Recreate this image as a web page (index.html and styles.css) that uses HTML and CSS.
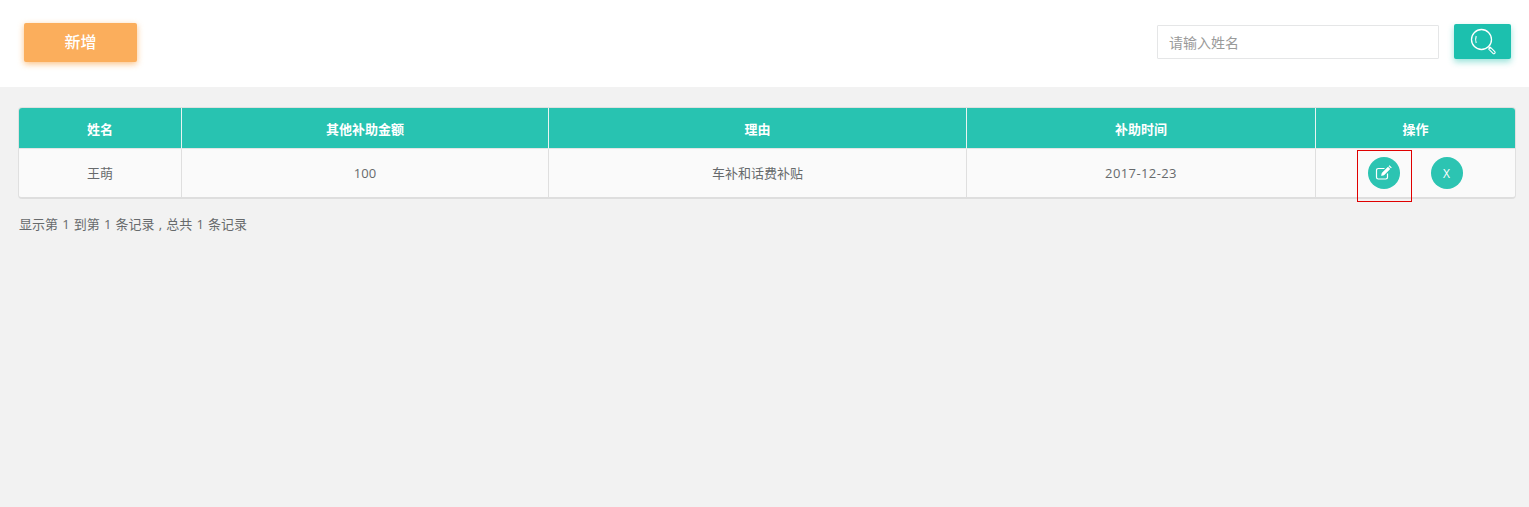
FILE: index.html
```html
<!DOCTYPE html>
<html lang="zh-CN">
<head>
  <meta charset="UTF-8" />
  <title>其他补助</title>
  <link rel="stylesheet" href="styles.css">
</head>
<body>
  <div class="toolbar">
    <button class="add-button">新增</button>
    <div class="search">
      <input class="search-input" type="text" placeholder="请输入姓名" />
      <button class="search-button" aria-label="搜索">
        <svg width="28" height="28" viewBox="0 0 28 28" fill="none" stroke="#fff">
          <circle cx="11.5" cy="11.5" r="10" stroke-width="1.3" />
          <path d="M6.200 8c-.8 2.300-.8 4.700 0 7" stroke-width="1.100" />
          <path d="M18.600 18.600l1.900 1.900" stroke-width="1.300" />
          <path d="M20.500 19.300l4.300 4.300a1.100 1.100 0 0 1 0 1.600l-.2.2a1.100 1.100 0 0 1-1.600 0l-4.300-4.300z" stroke-width="1.100" />
        </svg>
      </button>
    </div>
  </div>

  <div class="content">
    <table class="data-table">
      <thead>
        <tr>
          <th class="col-name">姓名</th>
          <th class="col-money">其他补助金额</th>
          <th class="col-reason">理由</th>
          <th class="col-time">补助时间</th>
          <th>操作</th>
        </tr>
      </thead>
      <tbody>
        <tr>
          <td>王萌</td>
          <td class="num-cell">100</td>
          <td>车补和话费补贴</td>
          <td class="num-cell date-cell">2017-12-23</td>
          <td class="num-cell">
            <div class="actions">
              <button class="round-button" aria-label="编辑">
                <svg class="edit-icon" width="18" height="16" viewBox="0 0 18 16" fill="none" stroke="#fff">
                  <path d="M12.500 8.500v3.800a1.700 1.700 0 0 1-1.700 1.700H3.200a1.700 1.700 0 0 1-1.700-1.700V5.200a1.700 1.700 0 0 1 1.700-1.700h6.300" stroke-width="1.200" />
                  <path d="M6.500 10.500l.6-2.500 5.900-5.900 1.900 1.900-5.900 5.900z" fill="#fff" stroke-width=".6" />
                  <path d="M13.900 1.200l.6-.6 1.900 1.900-.6.6z" fill="#fff" stroke-width=".6" />
                </svg>
                <span class="focus-box"></span>
              </button>
              <button class="round-button round-text">X</button>
            </div>
          </td>
        </tr>
      </tbody>
    </table>
    <p class="page-info">显示第 1 到第 1 条记录 , 总共 1 条记录</p>
  </div>
</body>
</html>
```

FILE: styles.css
```css
html, body { height: 100%; }
body { margin: 0; background: #f2f2f2; font-family: "Open Sans", "Noto Sans CJK SC", sans-serif; font-size: 13px; color: #676a6c; }
button { font-family: inherit; border: none; cursor: pointer; padding: 0; }

.toolbar {
  display: flex;
  justify-content: space-between;
  align-items: flex-start;
  height: 87px;
  box-sizing: border-box;
  padding: 23px 18px 0 24px;
  background: #fff;
}

.add-button {
  width: 113px;
  height: 39px;
  padding-bottom: 3px;
  background: #fbae5c;
  color: #fff;
  font-size: 16px;
  font-weight: 500;
  border-radius: 2px;
  box-shadow: 0 2px 6px rgba(251,174,92,0.75);
}

.search {
  display: flex;
  gap: 15px;
  padding-top: 1px;
}

.search-input {
  width: 282px;
  height: 34px;
  box-sizing: border-box;
  margin-top: 1px;
  padding: 0 11px;
  border: 1px solid #e5e6e7;
  border-radius: 1px;
  font-family: inherit;
  font-size: 14px;
  outline: none;
}

.search-input::placeholder { color: #9a9a9a; }

.search-button {
  display: flex;
  align-items: center;
  justify-content: center;
  width: 57px;
  height: 35px;
  background: #1cc0ae;
  border-radius: 2px;
  box-shadow: 0 3px 6px rgba(28,192,174,0.45);
}

.search-button svg { margin-top: 1px; margin-left: 3px; }

.content { padding: 20px 13px 0 18px; }

.data-table {
  width: 1498px;
  table-layout: fixed;
  border-collapse: separate;
  border-spacing: 0;
  border: 1px solid #e0e0e0;
  border-bottom: 2px solid #dedede;
  border-radius: 4px;
  background: #fafafa;
}

.data-table th, .data-table td {
  text-align: center;
  padding: 0;
  border-right: 1px solid #dfdfdf;
}

.data-table th:last-child, .data-table td:last-child { border-right: none; }
.data-table th:first-child { border-top-left-radius: 3px; }
.data-table th:last-child { border-top-right-radius: 3px; }

.data-table th {
  height: 40px;
  background: #28c3b1;
  color: #fff;
  font-weight: bold;
  border-bottom: 1px solid #e4e4e4;
  border-right-color: #e8f4f2;
}

.data-table td { height: 46px; padding-bottom: 2px; }
.data-table .num-cell { height: 48px; padding-bottom: 0; }
.date-cell { letter-spacing: 0.4px; }

.col-name { width: 162px; }
.col-money { width: 366px; }
.col-reason { width: 417px; }
.col-time { width: 348px; }

.actions {
  display: flex;
  justify-content: center;
  gap: 31px;
  padding-right: 1px;
}

.round-button {
  position: relative;
  display: flex;
  align-items: center;
  justify-content: center;
  width: 32px;
  height: 32px;
  border-radius: 50%;
  background: #2cc4b2;
  color: #fff;
}

.edit-icon { margin-left: 1px; }
.round-text { font-size: 12px; }

.focus-box {
  position: absolute;
  left: -11px;
  top: -7px;
  width: 53px;
  height: 50px;
  border: 1px solid #e00000;
}

.page-info { margin: 16px 0 0 1px; line-height: 18px; word-spacing: 0.8px; }
```
